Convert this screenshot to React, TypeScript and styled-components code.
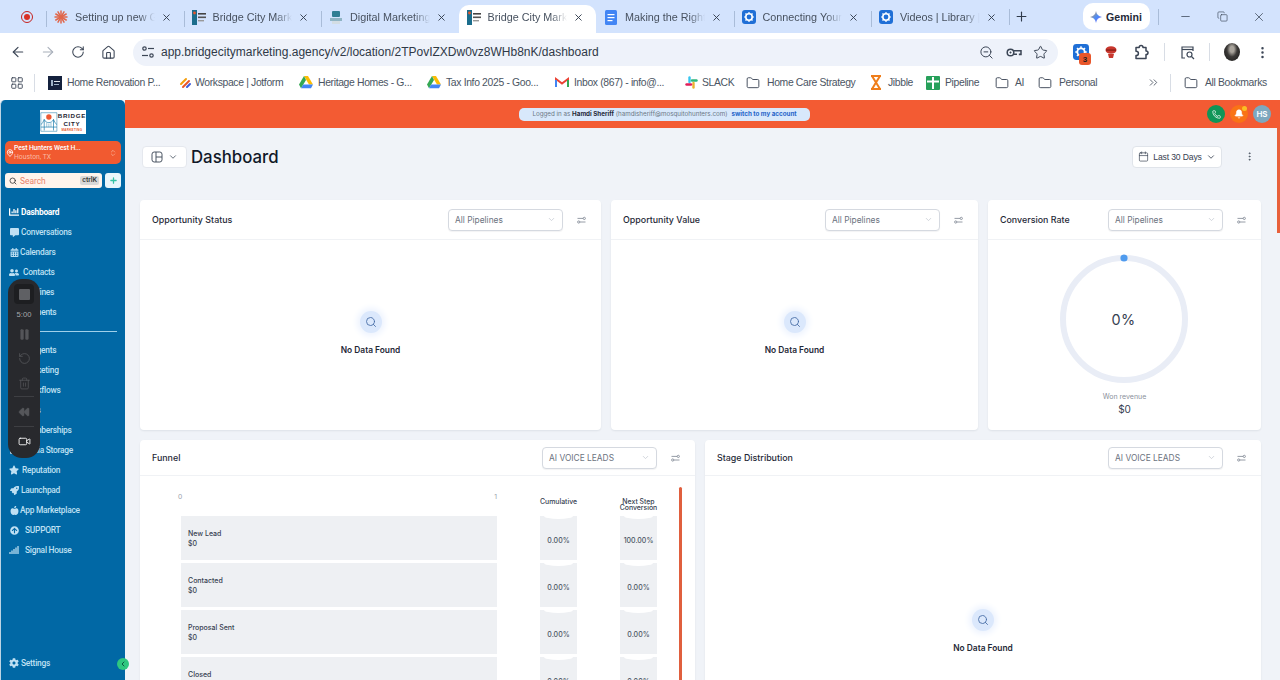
import React from "react";
import styled, { createGlobalStyle } from "styled-components";
import {
  ArrowLeft, ArrowRight, RotateCw, Home, ZoomOut, Star, MoreVertical,
  LayoutGrid, Folder, ChevronsRight, X, Plus, Minus, Copy, Search, Phone, Bell, Calendar,
  ChevronDown, Pause, RotateCcw, Trash2, Rewind, Video, ChevronLeft, ChevronsUpDown,
  MapPin,
} from "lucide-react";
import {
  FaChartBar, FaCommentAlt, FaCalendarAlt, FaUserFriends, FaStar, FaRocket, FaAppleAlt,
  FaArrowCircleUp, FaSignal, FaCog, FaFilter, FaCreditCard, FaRobot, FaBullhorn, FaSitemap, FaGlobe, FaUsers, FaFolder,
} from "react-icons/fa";

const Global = createGlobalStyle`
  html, body { margin: 0; padding: 0; background: #fff; }
  * { box-sizing: border-box; }
  #root { width: 1280px; height: 680px; overflow: hidden; }
`;

const Page = styled.div`
  width: 1280px; height: 680px; display: flex; flex-direction: column; overflow: hidden;
  font-family: Inter, "Liberation Sans", sans-serif; background: #fff;
`;

/* ---------- browser chrome ---------- */
const ChromeFont = `"Liberation Sans", Arial, sans-serif`;

const TabStrip = styled.div`
  height: 33px; display: flex; align-items: flex-end; background: #d3e3fd; font-family: ${ChromeFont};
`;
const RecordSlot = styled.div`
  width: 46px; height: 33px; display: flex; align-items: center; justify-content: flex-end; padding-right: 13px;
`;
const RecordDot = styled.div`
  width: 12px; height: 12px; border-radius: 50%; border: 1.5px solid #c5221f; display: flex; align-items: center; justify-content: center;
  &::after { content: ""; width: 6px; height: 6px; border-radius: 50%; background: #d93025; }
`;
const Tab = styled.div<{ $active?: boolean; $sep?: boolean }>`
  width: 137.5px; height: 28px; display: flex; align-items: center; padding: 0 12px 4px 7px; gap: 6px; position: relative;
  background: ${(p) => (p.$active ? "#fff" : "transparent")};
  border-radius: 10px 10px 0 0;
  &::before {
    content: ""; position: absolute; left: 0; top: 6px; height: 16px; width: 1px;
    background: ${(p) => (p.$sep ? "#a9bcd8" : "transparent")};
  }
`;
const TabIcon = styled.div`
  width: 16px; height: 16px; flex: none; display: flex; align-items: center; justify-content: center;
`;
const TabTitle = styled.div`
  flex: 1; min-width: 0; white-space: nowrap; overflow: hidden; font-size: 10.8px; color: #47515f;
  mask-image: linear-gradient(90deg, #000 80%, transparent);
`;
const TabPlus = styled.div`
  width: 30px; height: 33px; margin-left: -3px; display: flex; align-items: center; justify-content: center; color: #2f3a4a;
`;
const StripSep = styled.div`
  width: 1px; height: 16px; background: #a9bcd8; align-self: center; margin-bottom: 0;
`;
const GeminiPill = styled.div`
  margin: 0 8px 3px 46px; width: 67px; height: 27px; border-radius: 10px; background: #fff; display: flex; align-items: center;
  justify-content: center; gap: 4px; font-size: 10.6px; font-weight: 700; color: #1f2937;
`;
const WindowControls = styled.div`
  display: flex; align-items: center; height: 33px; margin-left: 8px; color: #3a4656;
`;
const WindowBtn = styled.div`
  width: 37px; height: 33px; display: flex; align-items: center; justify-content: center;
`;

const ToolBar = styled.div`
  height: 34px; display: flex; align-items: center; padding: 4px 0 0 3px; background: #fff; font-family: ${ChromeFont}; color: #3c4656;
`;
const NavBtn = styled.div<{ $dim?: boolean }>`
  width: 30px; height: 30px; display: flex; align-items: center; justify-content: center; color: ${(p) => (p.$dim ? "#a8afba" : "#3c4656")};
`;
const Omnibox = styled.div`
  margin-left: 10px; width: 925px; height: 27px; border-radius: 14px; background: #eef2fa; display: flex; align-items: center; padding: 0 10px 0 0;
`;
const TuneSlot = styled.div`
  width: 28px; display: flex; justify-content: center; padding-left: 1px;
`;
const UrlText = styled.div`
  flex: 1; font-size: 12px; color: #2f3947; white-space: nowrap;
`;
const OmniIcons = styled.div`
  display: flex; gap: 11.5px; color: #3c4656;
`;
const ExtGroup = styled.div`
  display: flex; align-items: center; margin-left: 8px;
`;
const ExtSlot = styled.div<{ $w: number }>`
  width: ${(p) => p.$w}px; height: 30px; display: flex; align-items: center; justify-content: center; position: relative;
`;
const ExtBadge = styled.div`
  position: absolute; right: 5px; bottom: 2px; width: 12px; height: 12px; border-radius: 3px; background: #e8562a; color: #1d1d1d;
  font-size: 8px; font-weight: 700; display: flex; align-items: center; justify-content: center;
`;
const ToolSep = styled.div`
  width: 1px; height: 18px; background: #d8dde5;
`;
const Avatar = styled.div`
  width: 16px; height: 18px; border-radius: 50%; background: radial-gradient(ellipse at 50% 35%, #a9a49c 0 18%, #3c3a38 45%, #141414 100%);
`;

const BookmarkBar = styled.div`
  height: 33px; display: flex; align-items: center; padding: 0 0 2px 8px; background: #fff; font-family: ${ChromeFont}; font-size: 10.4px; letter-spacing: -0.35px; color: #4b5563;
`;
const AppsSlot = styled.div`
  width: 18px; display: flex; justify-content: center; color: #3c4656;
`;
const BookmarkSep = styled.div<{ $ml: number; $mr: number }>`
  width: 1px; height: 18px; background: #d8dde5; margin: 0 ${(p) => p.$mr}px 0 ${(p) => p.$ml}px;
`;
const Bookmark = styled.div<{ $w: number; $gap?: number }>`
  width: ${(p) => p.$w}px; display: flex; align-items: center; gap: ${(p) => p.$gap ?? 5}px; white-space: nowrap; flex: none;
`;
const BookmarkIcon = styled.div`
  width: 14px; flex: none; display: flex; justify-content: center; align-items: center;
`;

/* ---------- app ---------- */
const AppRow = styled.div`
  flex: 1; min-height: 0; display: flex; position: relative; background: #f0f3f8;
`;
const Sidebar = styled.aside`
  width: 125px; flex: none; background: #0168a5; border-left: 1px solid #bcd4e4; border-radius: 5px 5px 0 0; padding-top: 10px;
  display: flex; flex-direction: column; position: relative; z-index: 2; font-family: Roboto, "Liberation Sans", sans-serif;
`;
const LogoBox = styled.div`
  width: 46px; height: 24px; margin-left: 39px; background: #fff; display: flex; align-items: center;
`;
const LogoText = styled.div`
  flex: 1; display: flex; flex-direction: column; align-items: center; line-height: 1; font-family: "Liberation Sans", sans-serif; font-weight: 700; color: #1d2430;
`;
const LogoLine = styled.div`
  font-size: 6.2px; letter-spacing: 0.7px; line-height: 8px;
`;
const LogoSmall = styled.div`
  font-size: 3px; letter-spacing: 0.3px; color: #e8562a; line-height: 4px;
`;
const LocationCard = styled.div`
  margin: 7px 4px 0 4px; height: 23px; border-radius: 5px; background: #f15a30; display: flex; align-items: center; padding: 0 4px 0 1px; gap: 0; color: #fff;
`;
const LocationText = styled.div`
  flex: 1; min-width: 0; display: flex; flex-direction: column; gap: 1px;
`;
const LocationName = styled.div`
  font-size: 6.8px; letter-spacing: -0.1px; font-weight: 500; line-height: 8px; white-space: nowrap;
`;
const LocationSub = styled.div`
  font-size: 6.8px; line-height: 8px; color: #f9b9a2;
`;
const SearchRow = styled.div`
  display: flex; gap: 3px; margin: 9px 4px 0 4px;
`;
const SearchBox = styled.div`
  flex: 1; height: 15px; background: #fff4ec; border-radius: 3px; display: flex; align-items: center; padding: 0 3px 0 4px; gap: 3px;
`;
const SearchLabel = styled.div`
  flex: 1; font-size: 8.4px; color: #e9806a;
`;
const Kbd = styled.div`
  background: #d8d8d8; border-radius: 2px; padding: 0 2px; font-size: 7px; line-height: 9px; color: #333; font-weight: 500;
`;
const QuickAdd = styled.div`
  width: 16px; height: 15px; background: #e9f6fb; border-radius: 3px; display: flex; align-items: center; justify-content: center; color: #35c3a4;
`;
const NavList = styled.nav`
  display: flex; flex-direction: column; margin-top: 14px;
`;
const NavItem = styled.div<{ $active?: boolean; $gap?: number }>`
  height: 20px; display: flex; align-items: center; padding-left: 8px; gap: ${(p) => p.$gap ?? 2}px; white-space: nowrap;
  font-size: 8.4px; letter-spacing: -0.25px; font-weight: ${(p) => (p.$active ? 700 : 500)}; color: ${(p) => (p.$active ? "#fff" : "#bfe0f3")};
`;
const NavIconBox = styled.div`
  width: 10px; height: 12px; display: flex; align-items: center; justify-content: center; flex: none;
`;
const NavDivider = styled.div`
  height: 1px; margin: 9px 8px 8px 8px; background: #9fd0ea;
`;
const SettingsRow = styled.div`
  margin-top: auto; padding-bottom: 7px;
`;
const Collapse = styled.div`
  position: absolute; right: -4px; bottom: 10px; width: 12px; height: 12px; border-radius: 50%; background: #2fc77f; color: #0b5a42;
  display: flex; align-items: center; justify-content: center;
`;
const Recorder = styled.div`
  position: absolute; left: 8px; top: 179px; width: 32px; height: 179px; border-radius: 14px; background: #28292d; z-index: 5;
  display: flex; flex-direction: column; align-items: center; padding-top: 5px; color: #55565a;
`;
const RecStopWrap = styled.div`
  width: 20px; height: 20px; border-radius: 4px; background: #1d1e21; display: flex; align-items: center; justify-content: center;
  &::after { content: ""; width: 11px; height: 11px; background: #5f6064; border-radius: 1px; }
`;
const RecTime = styled.div`
  margin-top: 4px; height: 14px; line-height: 14px; font-size: 7.6px; font-weight: 500; color: #a7a8ab; font-family: "Liberation Sans", sans-serif;
`;
const RecBtn = styled.div<{ $h: number; $light?: boolean }>`
  height: ${(p) => p.$h}px; display: flex; align-items: center; justify-content: center; color: ${(p) => (p.$light ? "#fff" : "#55565a")};
`;
const RecDivider = styled.div`
  width: 20px; height: 1px; background: #3e3f43; flex: none;
`;

const Main = styled.main`
  flex: 1; min-width: 0; display: flex; flex-direction: column; position: relative; overflow: hidden;
`;
const TopBar = styled.div`
  height: 28px; flex: none; background: #f35b33; display: flex; align-items: center; padding: 0 9px 0 394px; justify-content: space-between;
`;
const LoggedPill = styled.div`
  width: 291px; height: 13px; border-radius: 5px; background: #d8e8fb; display: flex; align-items: center; justify-content: center; gap: 4px;
  font-size: 6.25px; color: #6b7785; white-space: nowrap;
  b { color: #1f2937; font-weight: 700; }
`;
const SwitchLink = styled.span`
  color: #2563c9; font-weight: 700;
`;
const TopActions = styled.div`
  display: flex; align-items: center; gap: 5px;
`;
const RoundIcon = styled.div<{ $bg: string }>`
  width: 18px; height: 18px; border-radius: 50%; background: ${(p) => p.$bg}; color: #fff; display: flex; align-items: center; justify-content: center;
  font-size: 8px; font-weight: 600; position: relative;
`;
const BellDot = styled.div`
  position: absolute; top: 1px; right: 1px; width: 5px; height: 5px; border-radius: 50%; background: #fbbf24;
`;
const ScrollThumb = styled.div`
  position: absolute; right: 0; top: 28px; width: 3px; height: 105px; background: #e8603a;
`;

const Content = styled.div`
  flex: 1; min-height: 0; padding: 17px 19px 0 15px; display: flex; flex-direction: column; overflow: hidden;
`;
const TitleRow = styled.div`
  height: 23px; flex: none; display: flex; align-items: center;
`;
const ViewSwitch = styled.div`
  margin-left: 2px; width: 45px; height: 22px; background: #fff; border: 1px solid #e5e8ee; border-radius: 4px; display: flex; align-items: center; justify-content: center; gap: 5px; color: #4b5563;
`;
const PageTitle = styled.h1`
  margin: 0 0 0 4px; font-size: 16.8px; font-weight: 500; color: #101828; flex: 1;
`;
const DateBtn = styled.div`
  width: 90px; height: 22px; background: #fff; border: 1px solid #e0e4ea; border-radius: 4px; display: flex; align-items: center; justify-content: center; gap: 4px;
  font-family: "Liberation Sans", sans-serif; font-size: 8.6px; letter-spacing: -0.15px; color: #374151;
`;
const MenuDots = styled.div`
  width: 16px; margin: 0 4px 0 19px; display: flex; justify-content: center; color: #4b5563;
`;
const CardRow = styled.div<{ $cols: string; $mt: number }>`
  display: grid; grid-template-columns: ${(p) => p.$cols}; gap: 10px; margin-top: ${(p) => p.$mt}px; flex: none;
`;
const Card = styled.section<{ $h: number }>`
  height: ${(p) => p.$h}px; background: #fff; border-radius: 4px; box-shadow: 0 1px 2px rgba(16, 24, 40, 0.08); display: flex; flex-direction: column; overflow: hidden; position: relative;
`;
const CardHead = styled.header<{ $h: number }>`
  height: ${(p) => p.$h}px; flex: none; display: flex; align-items: center; padding: 0 11px 0 12px; border-bottom: 1px solid #f0f2f5;
`;
const CardTitle = styled.h2`
  margin: 0; flex: 1; font-size: 8.9px; font-weight: 500; color: #1f2937;
`;
const Select = styled.div`
  width: 115px; height: 22px; border: 1px solid #d5d9e0; border-radius: 4px; background: #fff; display: flex; align-items: center; justify-content: space-between; padding: 0 6px;
  font-size: 8.4px; color: #6b7280; box-shadow: 0 1px 1px rgba(16, 24, 40, 0.05);
`;
const FilterSlot = styled.div`
  width: 18px; margin-left: 9px; display: flex; justify-content: center;
`;
const CardBody = styled.div`
  flex: 1; min-height: 0; display: flex; flex-direction: column; align-items: center; justify-content: center; position: relative; padding-bottom: 4px;
`;
const EmptyIcon = styled.div`
  width: 22px; height: 22px; border-radius: 50%; background: #dbe8fc; box-shadow: 0 0 6px 3px #edf3fe; display: flex; align-items: center; justify-content: center; color: #4a6fa8;
`;
const EmptyText = styled.div`
  margin-top: 12px; font-size: 8.4px; font-weight: 600; color: #1f2937;
`;
const RingWrap = styled.div`
  width: 130px; height: 130px; position: relative; display: flex; align-items: center; justify-content: center; margin: 3px 2px 0 0;
`;
const RingPercent = styled.div`
  position: absolute; font-size: 14.4px; color: #374151; letter-spacing: 0.4px;
`;
const RingCaption = styled.div`
  margin-top: 8px; font-size: 7px; color: #8a919c;
`;
const RingValue = styled.div`
  margin-top: 2px; font-size: 10px; color: #374151;
`;

const FunnelBody = styled.div`
  flex: 1; min-height: 0; padding: 14px 0 0 41px; position: relative; overflow: hidden;
`;
const FunnelGrid = styled.div`
  display: grid; grid-template-columns: 316px 37px 37px; column-gap: 43px; row-gap: 3px; grid-auto-rows: 44px;
`;
const AxisCell = styled.div`
  height: 26px; display: flex; justify-content: space-between; font-size: 6.8px; color: #9aa1ac; margin-left: -3px; padding-top: 2px;
`;
const ColumnHead = styled.div`
  height: 26px; margin: 0 -8px; padding-top: 8.5px; text-align: center; font-size: 6.9px; line-height: 6.8px; font-weight: 500; color: #374151;
`;
const HeadRow = styled.div`
  display: grid; grid-template-columns: 316px 37px 37px; column-gap: 43px;
`;
const FunnelBar = styled.div`
  background: #eef0f3; padding: 13px 0 0 7px; font-size: 7px; line-height: 10px; color: #374151; font-weight: 500;
`;
const PercentCell = styled.div`
  background: #eef0f3; display: flex; align-items: center; justify-content: center; padding-top: 4px; font-size: 7px; color: #4b5563; font-weight: 500; position: relative; overflow: hidden;
  &::before { content: ""; position: absolute; top: -3px; left: 4px; right: 4px; height: 6px; background: #fff; border-radius: 50%; }
`;
const InnerScroll = styled.div`
  position: absolute; right: 13px; top: 11px; bottom: -10px; width: 3px; border-radius: 2px; background: #e05f3e;
`;

/* ---------- drawings ---------- */
const Tune = () => (
  <svg width="14" height="14" viewBox="0 0 14 14" fill="none" stroke="#3c4656" strokeWidth="1.2">
    <circle cx="3.5" cy="3.5" r="1.7" /><line x1="7" y1="3.5" x2="13" y2="3.5" />
    <circle cx="10.5" cy="10.5" r="1.7" /><line x1="1" y1="10.5" x2="7" y2="10.5" />
  </svg>
);
const PasswordKey = () => (
  <svg width="16" height="15" viewBox="0 0 16 15" fill="none" stroke="#3c4656" strokeWidth="1.5">
    <circle cx="4.5" cy="7.5" r="3.3" /><circle cx="4.5" cy="7.5" r="0.7" fill="#3c4656" strokeWidth="0.6" />
    <path d="M7.8 5.8H15V9.6H13.6V8.4M7.8 9.2H11" />
  </svg>
);
const PuzzleOutline = () => (
  <svg width="15" height="16" viewBox="0 0 15 16" fill="none" stroke="#3c4656" strokeWidth="1.5" strokeLinejoin="round">
    <path d="M2 3.5H5.2C5.2 0.8 9 0.8 9 3.5H12V7C14.7 7 14.7 10.6 12 10.6V14.5H2V11.5C3.5 11.5 4.4 10.7 4.4 9.4C4.4 8.1 3.5 7.3 2 7.3Z" />
  </svg>
);
const FilterGlyph = () => (
  <svg width="9" height="8" viewBox="0 0 11 10" fill="none" stroke="#7b8390" strokeWidth="1">
    <line x1="0.5" y1="3" x2="7.5" y2="3" /><circle cx="9" cy="3" r="1.4" />
    <line x1="3.5" y1="7.5" x2="10.5" y2="7.5" /><circle cx="2" cy="7.5" r="1.4" />
  </svg>
);
const ViewGlyph = () => (
  <svg width="12" height="12" viewBox="0 0 12 12" fill="none" stroke="#4b5563" strokeWidth="1">
    <rect x="1" y="1" width="10" height="10" rx="2.2" /><line x1="5" y1="1" x2="5" y2="11" /><line x1="5" y1="6" x2="11" y2="6" />
  </svg>
);
const Burst = () => (
  <svg width="14" height="14" viewBox="0 0 14 14" stroke="#e0664a" strokeWidth="1.5" strokeLinecap="round">
    {[0, 30, 60, 90, 120, 150].map((a) => <line key={a} x1="7" y1="1" x2="7" y2="13" transform={`rotate(${a} 7 7)`} />)}
  </svg>
);
const MiniBridge = () => (
  <svg width="14" height="15" viewBox="0 0 14 15">
    <rect x="0" y="0" width="5" height="15" fill="#1b6d8c" /><circle cx="2.5" cy="3" r="1.4" fill="#e8562a" />
    <rect x="6" y="3" width="8" height="1.6" fill="#444" /><rect x="6" y="6.5" width="8" height="1.6" fill="#555" />
    <rect x="6" y="10" width="6" height="1.4" fill="#999" />
  </svg>
);
const MiniDigital = () => (
  <svg width="14" height="15" viewBox="0 0 14 15">
    <rect x="3" y="1" width="8" height="6" rx="1" fill="#2f7e93" /><rect x="1" y="8" width="12" height="3" fill="#8fb4c4" /><rect x="3" y="11" width="8" height="3" fill="#d3dde3" />
  </svg>
);
const DocsIcon = () => (
  <svg width="12" height="15" viewBox="0 0 12 15">
    <rect width="12" height="15" rx="1.5" fill="#4285f4" />
    <rect x="2.5" y="4" width="7" height="1.2" fill="#fff" /><rect x="2.5" y="7" width="7" height="1.2" fill="#fff" /><rect x="2.5" y="10" width="5" height="1.2" fill="#fff" />
  </svg>
);
const GearTile = ({ size = 14 }: { size?: number }) => (
  <svg width={size} height={size} viewBox="0 0 14 14">
    <rect width="14" height="14" rx="3" fill="#1f6fd6" />
    <circle cx="7" cy="7" r="3.2" fill="none" stroke="#fff" strokeWidth="1.6" />
    <g stroke="#fff" strokeWidth="1.2">
      {[0, 45, 90, 135].map((a) => <line key={a} x1="7" y1="2" x2="7" y2="12" transform={`rotate(${a} 7 7)`} strokeDasharray="1.5 7" />)}
    </g>
  </svg>
);
const GeminiStar = () => (
  <svg width="12" height="12" viewBox="0 0 12 12">
    <defs><linearGradient id="gem" x1="0" y1="0" x2="1" y2="1"><stop offset="0" stopColor="#f0a02c" /><stop offset="0.5" stopColor="#4c8df6" /><stop offset="1" stopColor="#7a5cf0" /></linearGradient></defs>
    <path d="M6 0C6.4 3.4 8.6 5.6 12 6C8.6 6.4 6.4 8.6 6 12C5.6 8.6 3.4 6.4 0 6C3.4 5.6 5.6 3.4 6 0Z" fill="url(#gem)" />
  </svg>
);
const RedExt = () => (
  <svg width="14" height="14" viewBox="0 0 14 14">
    <ellipse cx="7" cy="5" rx="5.5" ry="3.8" fill="#c8372d" /><rect x="2" y="4.4" width="10" height="1.4" fill="#8e1f18" />
    <path d="M4 9h6l-1 4H5z" fill="#c8372d" />
  </svg>
);
const ReadingList = () => (
  <svg width="15" height="15" viewBox="0 0 15 15" fill="none" stroke="#3c4656" strokeWidth="1.2">
    <path d="M5 13H2V2h11v4" /><line x1="2" y1="4.5" x2="13" y2="4.5" /><circle cx="9.5" cy="9.5" r="2.5" /><line x1="11.5" y1="11.5" x2="14" y2="14" />
  </svg>
);
const HomeReno = () => (
  <svg width="14" height="14" viewBox="0 0 14 14"><rect width="14" height="14" fill="#14213d" /><rect x="3" y="4" width="2" height="6" fill="#9fb3c8" /><rect x="6" y="5" width="6" height="1" fill="#dfe6ec" /><rect x="6" y="8" width="5" height="1" fill="#9fb3c8" /></svg>
);
const Jotform = () => (
  <svg width="13" height="13" viewBox="0 0 13 13" strokeWidth="2" strokeLinecap="round">
    <line x1="2" y1="8" x2="7" y2="3" stroke="#f59e0b" /><line x1="4" y1="11" x2="10" y2="5" stroke="#e8562a" /><line x1="8" y1="11" x2="11" y2="8" stroke="#3b5bdb" />
  </svg>
);
const Drive = () => (
  <svg width="14" height="13" viewBox="0 0 14 13">
    <path d="M5 0h4l5 8.5h-4z" fill="#fbbc04" /><path d="M5 0L0 8.5l2 3.8L7 4z" fill="#34a853" /><path d="M2 12.3h10l2-3.8H4.2z" fill="#4285f4" />
  </svg>
);
const Gmail = () => (
  <svg width="14" height="11" viewBox="0 0 14 11" fill="none">
    <path d="M1 10V2l6 4.5L13 2v8" stroke="#ea4335" strokeWidth="2" /><path d="M1 10V3" stroke="#4285f4" strokeWidth="2" /><path d="M13 10V3" stroke="#34a853" strokeWidth="2" />
  </svg>
);
const Slack = () => (
  <svg width="13" height="13" viewBox="0 0 13 13" strokeWidth="2.4" strokeLinecap="round">
    <line x1="4.5" y1="1.5" x2="4.5" y2="6" stroke="#36c5f0" /><line x1="7" y1="4.5" x2="11.5" y2="4.5" stroke="#2eb67d" />
    <line x1="8.5" y1="7" x2="8.5" y2="11.5" stroke="#ecb22e" /><line x1="1.5" y1="8.5" x2="6" y2="8.5" stroke="#e01e5a" />
  </svg>
);
const Jibble = () => (
  <svg width="12" height="15" viewBox="0 0 12 15" fill="none" stroke="#ef7d1a" strokeWidth="2">
    <path d="M1 1h10M1 14h10M2 1l8 13M10 1L2 14" />
  </svg>
);
const PipelineIco = () => (
  <svg width="14" height="14" viewBox="0 0 14 14"><rect width="14" height="14" rx="1" fill="#27a05a" /><rect x="6" y="1" width="2" height="12" fill="#fff" /><rect x="1" y="4.5" width="12" height="2" fill="#fff" /></svg>
);
const BridgeArt = () => (
  <svg width="21" height="24" viewBox="0 0 21 24" fill="none" stroke="#1478a8" strokeWidth="0.8">
    <circle cx="10.5" cy="6" r="3.2" fill="#ee5a33" stroke="none" />
    <path d="M1 1v22h19V1z" strokeWidth="0.6" />
    <path d="M5 22V9M16 22V9M1 15C3 14 4 11 5 9C7 14 14 14 16 9C17 11 18 14 20 15M1 18h19" />
    <path d="M8 18v-5M10.5 18v-4M13 18v-5" strokeWidth="0.5" />
  </svg>
);
const Ring = () => (
  <svg width="130" height="130" viewBox="0 0 130 130">
    <circle cx="65" cy="65" r="61" fill="none" stroke="#e9edf6" strokeWidth="6" />
    <circle cx="65" cy="4" r="3.6" fill="#4f9bee" />
  </svg>
);

const Empty = () => (
  <>
    <EmptyIcon><Search size={12} strokeWidth={1.8} /></EmptyIcon>
    <EmptyText>No Data Found</EmptyText>
  </>
);

const tabs = [
  { t: "Setting up new GHL account", i: <Burst />, sep: true },
  { t: "Bridge City Marketing", i: <MiniBridge />, sep: true },
  { t: "Digital Marketing Agency", i: <MiniDigital />, sep: true },
  { t: "Bridge City Marketing", i: <MiniBridge />, active: true },
  { t: "Making the Right Choice", i: <DocsIcon /> },
  { t: "Connecting Your Account", i: <GearTile />, sep: true },
  { t: "Videos | Library | Loom", i: <GearTile />, sep: true },
];

const folder = <Folder size={14} strokeWidth={1.6} color="#3c4656" />;
const bookmarks = [
  { t: "Home Renovation P...", i: <HomeReno />, w: 130, g: 5 },
  { t: "Workspace | Jotform", i: <Jotform />, w: 121, g: 3 },
  { t: "Heritage Homes - G...", i: <Drive />, w: 128, g: 5 },
  { t: "Tax Info 2025 - Goo...", i: <Drive />, w: 128, g: 5 },
  { t: "Inbox (867) - info@...", i: <Gmail />, w: 129, g: 5 },
  { t: "SLACK", i: <Slack />, w: 62, g: 4 },
  { t: "Home Care Strategy", i: folder, w: 123, g: 7 },
  { t: "Jibble", i: <Jibble />, w: 57, g: 5 },
  { t: "Pipeline", i: <PipelineIco />, w: 69, g: 5 },
  { t: "AI", i: folder, w: 43, g: 6 },
  { t: "Personal", i: folder, w: 108, g: 7 },
];

const navTop = [
  { t: "Dashboard", i: <FaChartBar size={10} />, active: true, gap: 2 },
  { t: "Conversations", i: <FaCommentAlt size={9} />, gap: 2 },
  { t: "Calendars", i: <FaCalendarAlt size={9} />, gap: 1 },
  { t: "Contacts", i: <FaUserFriends size={11} />, gap: 4 },
  { t: "Pipelines", i: <FaFilter size={9} />, gap: 3 },
  { t: "Payments", i: <FaCreditCard size={9} />, gap: 2 },
];
const navBottom = [
  { t: "AI Agents", i: <FaRobot size={9} />, gap: 3 },
  { t: "Marketing", i: <FaBullhorn size={9} />, gap: 4 },
  { t: "Workflows", i: <FaSitemap size={9} />, gap: 4 },
  { t: "Sites", i: <FaGlobe size={9} />, gap: 4 },
  { t: "Memberships", i: <FaUsers size={9} />, gap: 4 },
  { t: "Media Storage", i: <FaFolder size={9} />, gap: 3 },
  { t: "Reputation", i: <FaStar size={10} />, gap: 3 },
  { t: "Launchpad", i: <FaRocket size={9} />, gap: 2 },
  { t: "App Marketplace", i: <FaAppleAlt size={9} />, gap: 1 },
  { t: "SUPPORT", i: <FaArrowCircleUp size={9} />, gap: 6 },
  { t: "Signal House", i: <FaSignal size={10} />, gap: 6 },
];
const funnel = [
  { n: "New Lead", c: "0.00%", s: "100.00%" },
  { n: "Contacted", c: "0.00%", s: "0.00%" },
  { n: "Proposal Sent", c: "0.00%", s: "0.00%" },
  { n: "Closed", c: "0.00%", s: "0.00%" },
];

const CardHeader = ({ title, value, h = 40 }: { title: string; value: string; h?: number }) => (
  <CardHead $h={h}>
    <CardTitle>{title}</CardTitle>
    <Select>{value}<ChevronDown size={9} color="#c4c9d1" /></Select>
    <FilterSlot><FilterGlyph /></FilterSlot>
  </CardHead>
);

export default function App() {
  return (
    <Page>
      <Global />
      <TabStrip>
        <RecordSlot><RecordDot /></RecordSlot>
        {tabs.map((x, idx) => (
          <Tab key={idx} $active={x.active} $sep={x.sep}>
            <TabIcon>{x.i}</TabIcon>
            <TabTitle>{x.t}</TabTitle>
            <X size={11} strokeWidth={2} color="#2f3a4a" />
          </Tab>
        ))}
        <StripSep />
        <TabPlus><Plus size={15} strokeWidth={1.8} /></TabPlus>
        <GeminiPill><GeminiStar />Gemini</GeminiPill>
        <StripSep />
        <WindowControls>
          <WindowBtn><Minus size={13} strokeWidth={1.4} /></WindowBtn>
          <WindowBtn><Copy size={11} strokeWidth={1.4} /></WindowBtn>
          <WindowBtn><X size={14} strokeWidth={1.3} /></WindowBtn>
        </WindowControls>
      </TabStrip>

      <ToolBar>
        <NavBtn><ArrowLeft size={16} strokeWidth={1.8} /></NavBtn>
        <NavBtn $dim><ArrowRight size={16} strokeWidth={1.6} /></NavBtn>
        <NavBtn><RotateCw size={14} strokeWidth={1.8} /></NavBtn>
        <NavBtn><Home size={15} strokeWidth={1.7} /></NavBtn>
        <Omnibox>
          <TuneSlot><Tune /></TuneSlot>
          <UrlText>app.bridgecitymarketing.agency/v2/location/2TPovIZXDw0vz8WHb8nK/dashboard</UrlText>
          <OmniIcons>
            <ZoomOut size={15} strokeWidth={1.6} />
            <PasswordKey />
            <Star size={15} strokeWidth={1.6} />
          </OmniIcons>
        </Omnibox>
        <ExtGroup>
          <ExtSlot $w={30}><GearTile size={16} /><ExtBadge>3</ExtBadge></ExtSlot>
          <ExtSlot $w={30}><RedExt /></ExtSlot>
          <ExtSlot $w={31}><PuzzleOutline /></ExtSlot>
          <ExtSlot $w={7} />
          <ToolSep />
          <ExtSlot $w={44}><ReadingList /></ExtSlot>
          <ToolSep />
          <ExtSlot $w={43}><Avatar /></ExtSlot>
          <ExtSlot $w={18}><MoreVertical size={15} strokeWidth={2} /></ExtSlot>
        </ExtGroup>
      </ToolBar>

      <BookmarkBar>
        <AppsSlot><LayoutGrid size={14} strokeWidth={1.6} /></AppsSlot>
        <BookmarkSep $ml={8} $mr={13} />
        {bookmarks.map((b) => (
          <Bookmark key={b.t} $w={b.w} $gap={b.g}><BookmarkIcon>{b.i}</BookmarkIcon>{b.t}</Bookmark>
        ))}
        <Bookmark $w={24}><BookmarkIcon><ChevronsRight size={13} strokeWidth={1.6} /></BookmarkIcon></Bookmark>
        <BookmarkSep $ml={0} $mr={13} />
        <Bookmark $w={80} $gap={7}><BookmarkIcon>{folder}</BookmarkIcon>All Bookmarks</Bookmark>
      </BookmarkBar>

      <AppRow>
        <Sidebar>
          <LogoBox>
            <BridgeArt />
            <LogoText>
              <LogoLine>BRIDGE</LogoLine>
              <LogoLine>CITY</LogoLine>
              <LogoSmall>MARKETING</LogoSmall>
            </LogoText>
          </LogoBox>
          <LocationCard>
            <MapPin size={8} strokeWidth={2.6} />
            <LocationText>
              <LocationName>Pest Hunters West H...</LocationName>
              <LocationSub>Houston, TX</LocationSub>
            </LocationText>
            <ChevronsUpDown size={8} color="#f9b9a2" />
          </LocationCard>
          <SearchRow>
            <SearchBox>
              <Search size={8} strokeWidth={2.4} color="#333" />
              <SearchLabel>Search</SearchLabel>
              <Kbd>ctrlK</Kbd>
            </SearchBox>
            <QuickAdd><Plus size={9} strokeWidth={3.4} /></QuickAdd>
          </SearchRow>
          <NavList>
            {navTop.map((n) => (
              <NavItem key={n.t} $active={n.active} $gap={n.gap}><NavIconBox>{n.i}</NavIconBox>{n.t}</NavItem>
            ))}
            <NavDivider />
            {navBottom.map((n) => (
              <NavItem key={n.t} $gap={n.gap}><NavIconBox>{n.i}</NavIconBox>{n.t}</NavItem>
            ))}
          </NavList>
          <SettingsRow>
            <NavItem $gap={2}><NavIconBox><FaCog size={10} /></NavIconBox>Settings</NavItem>
          </SettingsRow>
          <Collapse><ChevronLeft size={8} strokeWidth={3} /></Collapse>
        </Sidebar>

        <Recorder>
          <RecStopWrap />
          <RecTime>5:00</RecTime>
          <RecBtn $h={25}><Pause size={13} fill="currentColor" strokeWidth={1} /></RecBtn>
          <RecBtn $h={23}><RotateCcw size={13} strokeWidth={1.5} /></RecBtn>
          <RecBtn $h={26}><Trash2 size={13} strokeWidth={1.4} /></RecBtn>
          <RecDivider />
          <RecBtn $h={29}><Rewind size={12} fill="currentColor" strokeWidth={1} /></RecBtn>
          <RecDivider />
          <RecBtn $h={28} $light><Video size={13} strokeWidth={1.6} /></RecBtn>
        </Recorder>

        <Main>
          <TopBar>
            <LoggedPill>
              <span>Logged in as <b>Hamdi Sheriff</b> (hamdisheriff@mosquitohunters.com)</span>
              <SwitchLink>switch to my account</SwitchLink>
            </LoggedPill>
            <TopActions>
              <RoundIcon $bg="#0f9557"><Phone size={9} strokeWidth={2} /></RoundIcon>
              <RoundIcon $bg="#f97316"><Bell size={10} fill="#fff" strokeWidth={1.6} /><BellDot /></RoundIcon>
              <RoundIcon $bg="#7da8bf">HS</RoundIcon>
            </TopActions>
          </TopBar>
          <ScrollThumb />
          <Content>
            <TitleRow>
              <ViewSwitch><ViewGlyph /><ChevronDown size={10} strokeWidth={2} /></ViewSwitch>
              <PageTitle>Dashboard</PageTitle>
              <DateBtn><Calendar size={11} strokeWidth={1.5} />Last 30 Days<ChevronDown size={10} strokeWidth={2} /></DateBtn>
              <MenuDots><MoreVertical size={11} strokeWidth={2} /></MenuDots>
            </TitleRow>

            <CardRow $cols="461px 367px 273px" $mt={32}>
              <Card $h={230}>
                <CardHeader title="Opportunity Status" value="All Pipelines" />
                <CardBody><Empty /></CardBody>
              </Card>
              <Card $h={230}>
                <CardHeader title="Opportunity Value" value="All Pipelines" />
                <CardBody><Empty /></CardBody>
              </Card>
              <Card $h={230}>
                <CardHeader title="Conversion Rate" value="All Pipelines" />
                <CardBody>
                  <RingWrap><Ring /><RingPercent>0%</RingPercent></RingWrap>
                  <RingCaption>Won revenue</RingCaption>
                  <RingValue>$0</RingValue>
                </CardBody>
              </Card>
            </CardRow>

            <CardRow $cols="555px 556px" $mt={10}>
              <Card $h={350}>
                <CardHeader title="Funnel" value="AI VOICE LEADS" h={36} />
                <FunnelBody>
                  <HeadRow>
                    <AxisCell><span>0</span><span>1</span></AxisCell>
                    <ColumnHead>Cumulative</ColumnHead>
                    <ColumnHead>Next Step Conversion</ColumnHead>
                  </HeadRow>
                  <FunnelGrid>
                    {funnel.map((f) => (
                      <React.Fragment key={f.n}>
                        <FunnelBar>{f.n}<br />$0</FunnelBar>
                        <PercentCell>{f.c}</PercentCell>
                        <PercentCell>{f.s}</PercentCell>
                      </React.Fragment>
                    ))}
                  </FunnelGrid>
                  <InnerScroll />
                </FunnelBody>
              </Card>
              <Card $h={350}>
                <CardHeader title="Stage Distribution" value="AI VOICE LEADS" h={36} />
                <CardBody><Empty /></CardBody>
              </Card>
            </CardRow>
          </Content>
        </Main>
      </AppRow>
    </Page>
  );
}
